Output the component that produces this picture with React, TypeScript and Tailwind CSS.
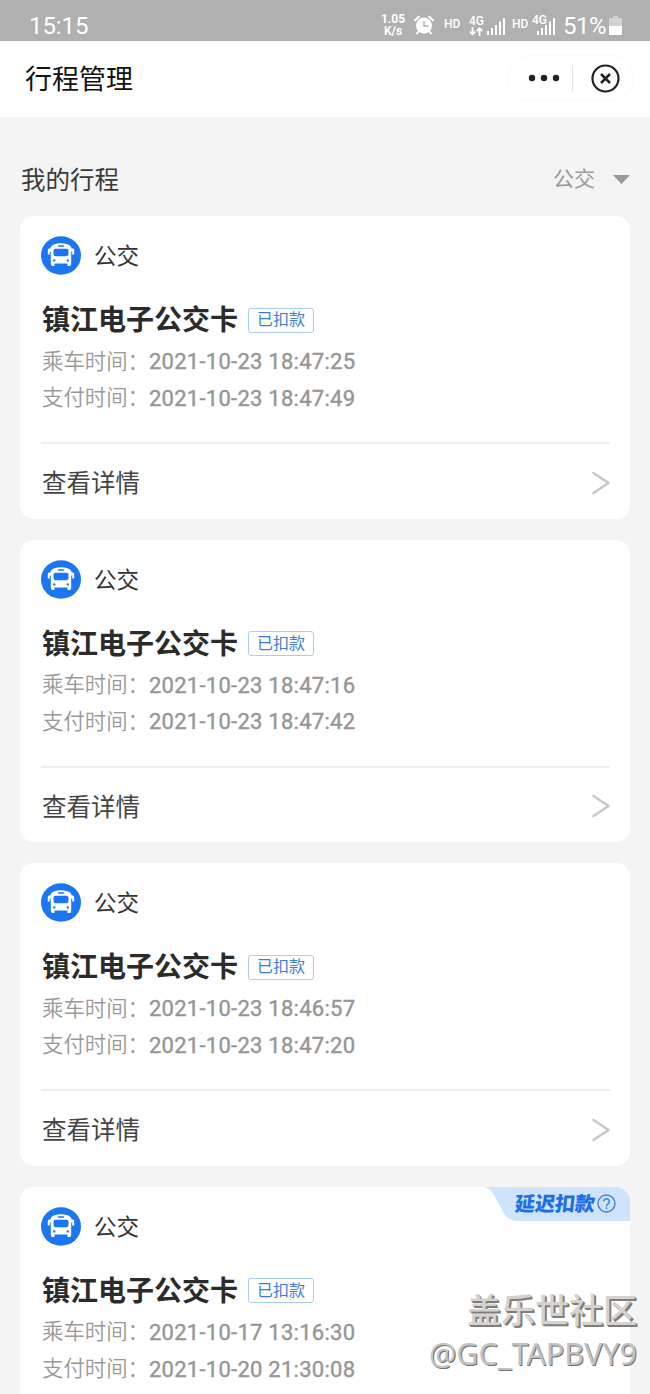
import React from 'react';

interface Trip {
  rideTime: string;
  payTime: string;
  delayed?: boolean;
}

const TRIPS: Trip[] = [
  { rideTime: '2021-10-23 18:47:25', payTime: '2021-10-23 18:47:49' },
  { rideTime: '2021-10-23 18:47:16', payTime: '2021-10-23 18:47:42' },
  { rideTime: '2021-10-23 18:46:57', payTime: '2021-10-23 18:47:20' },
  { rideTime: '2021-10-17 13:16:30', payTime: '2021-10-20 21:30:08', delayed: true },
];

const SignalBars: React.FC<{ className?: string }> = ({ className }) => (
  <svg className={className} width="18" height="18" viewBox="0 0 18 18" fill="currentColor">
    <rect x="0" y="14" width="2" height="4" />
    <rect x="4" y="11" width="2" height="7" />
    <rect x="8" y="8" width="2" height="10" />
    <rect x="12" y="4.500" width="2" height="13.500" />
    <rect x="16" y="1" width="2" height="17" />
  </svg>
);

const AlarmIcon = () => (
  <svg width="20" height="20" viewBox="0 0 20 20" fill="none" stroke="currentColor" strokeLinecap="round">
    <circle cx="10" cy="10.500" r="8" fill="currentColor" stroke="none" />
    <path d="M1 5.200 5 1.600M19 5.200 15 1.600" strokeWidth="2" />
    <path d="M4.800 16 3 18.500M15.200 16 17 18.500" strokeWidth="2" />
    <path d="M10 6.500v4.500h4" stroke="#b0b0b0" strokeWidth="1.500" />
  </svg>
);

const StatusBar = () => (
  <div className="flex h-[41px] shrink-0 items-end bg-[#b0b0b0] pb-[2px] pl-[29px] pr-[28px] text-white">
    <span className="font-[Roboto] text-[24px] leading-[25px] tracking-[-0.1px]">15:15</span>
    <div className="ml-auto flex items-end font-[Roboto]">
      <div className="mb-[2px] mr-px w-[26px] text-center text-[12px] font-bold leading-[12px]">
        <div>1.05</div>
        <div>K/s</div>
      </div>
      <div className="mb-[4px] ml-[7px]"><AlarmIcon /></div>
      <span className="mb-[8px] ml-[10px] w-[17px] text-[12px] font-medium leading-[13px]">HD</span>
      <div className="mb-[3px] ml-[8px] w-[17px] text-[12px] font-medium leading-[11px]">
        <div>4G</div>
        <svg width="14" height="9" viewBox="0 0 14 9" fill="none" stroke="currentColor" strokeWidth="1.800">
          <path d="M3.500 0v7M.8 4.500 3.500 7.500l2.700-3M10.500 9V1.500M7.800 4.200l2.700-3 2.700 3" />
        </svg>
      </div>
      <SignalBars className="mb-[4px] ml-px" />
      <span className="mb-[8px] ml-[7px] w-[17px] text-[12px] font-medium leading-[13px]">HD</span>
      <div className="relative mb-[4px] ml-[8px]">
        <SignalBars />
        <span className="absolute -left-[5px] -top-[3px] text-[12px] font-medium leading-[12px] [text-shadow:0_0_1px_#b0b0b0]">4G</span>
      </div>
      <span className="ml-[8px] w-[45px] text-[24px] leading-[25px] tracking-[-0.5px]">51%</span>
      <svg className="mb-[4px] ml-px" width="13" height="19" viewBox="0 0 13 19">
        <path d="M4 0h5v2h4v17H0V2h4z" fill="#d2d2d2" />
        <path d="M0 10h13v8a1 1 0 0 1-1 1H1a1 1 0 0 1-1-1z" fill="#fff" />
      </svg>
    </div>
  </div>
);

const Header = () => (
  <header className="flex h-[76px] shrink-0 items-center justify-between bg-white pb-[2px] pl-[25px] pr-[16px]">
    <h1 className="pb-[2px] text-[27px] leading-none text-[#111]">行程管理</h1>
    <div className="flex h-[46px] w-[127px] items-center rounded-full border border-[#fafafa] pl-[20px] text-[#222]">
      <svg width="32" height="8" viewBox="0 0 32 8" fill="currentColor">
        <circle cx="4" cy="4" r="3.200" />
        <circle cx="16" cy="4" r="3.200" />
        <circle cx="28" cy="4" r="3.200" />
      </svg>
      <div className="ml-[12px] h-[26px] w-px bg-[#e4e4e4]" />
      <svg className="ml-[18px]" width="29" height="29" viewBox="0 0 29 29" fill="none" stroke="currentColor">
        <circle cx="14.500" cy="14.500" r="13" strokeWidth="2.200" />
        <path d="m10 10 9 9m0-9-9 9" strokeWidth="2.500" />
      </svg>
    </div>
  </header>
);

const BusIcon = () => (
  <svg width="40" height="39" viewBox="0 0 40 39">
    <ellipse cx="20" cy="19.500" rx="20" ry="19.300" fill="#1b76f2" />
    <path
      fill="#fff"
      d="M13.500 8.200Q20 6.400 26.500 8.200Q30 9.300 30.700 12.500H32q1.200.2 1.200 1.700v4.300h-2v-3h-1V27.500q0 2.500-1.700 2.500h-2v-2.500H13.500V30h-2q-1.700 0-1.700-2.500V15.500h-1v3h-2v-4.300Q6.800 12.700 8 12.500h1.300Q10 9.300 13.500 8.200z"
    />
    <path d="M17.500 10h5" stroke="#1b76f2" strokeWidth="1.300" strokeLinecap="round" />
    <path d="M14.500 12.700h11q2 0 2 2v2.500q0 3-2.300 3H14.800q-2.300 0-2.300-3v-2.500q0-2 2-2z" fill="#1b76f2" />
    <circle cx="13.200" cy="24.400" r="1.200" fill="#1b76f2" />
    <circle cx="26.800" cy="24.400" r="1.200" fill="#1b76f2" />
  </svg>
);

const TimeValue: React.FC<{ value: string }> = ({ value }) => (
  <span className="pt-[2px] font-[Roboto] text-[22px] tracking-[0.26px] text-[#969696] [-webkit-text-stroke:0.4px_#969696]">
    {value}
  </span>
);

const DelayBadge = () => (
  <div className="absolute right-0 top-0 h-[34px] w-[146px] overflow-hidden rounded-tr-[14px]">
    <svg className="absolute inset-0" width="146" height="34" viewBox="0 0 146 34">
      <path d="M0 0Q6 1 10 8L18 23Q23 34 34 34H146V0z" fill="#d0e3fc" />
    </svg>
    <div className="relative flex h-full items-center pl-[31px] text-[#1b6fe8]">
      <span className="-skew-x-6 pb-px text-[20px] font-black leading-none">延迟扣款</span>
      <svg className="ml-[2px]" width="19" height="19" viewBox="0 0 19 19" fill="none" stroke="#3f82e0">
        <circle cx="9.500" cy="9.500" r="8.500" strokeWidth="1.400" />
        <path d="M6.700 7.500a2.800 2.800 0 1 1 4.500 2.200q-1.700 1.100-1.700 2.500M9.500 13.300v1.700" strokeWidth="1.500" />
      </svg>
    </div>
  </div>
);

const TripCard: React.FC<{ trip: Trip }> = ({ trip }) => (
  <section className="relative h-[302.600px] shrink-0 rounded-[14px] bg-white pl-[21px] pr-[20px] pt-[20px]">
    {trip.delayed && <DelayBadge />}
    <div className="flex h-[39px] items-center">
      <BusIcon />
      <span className="ml-[13px] pb-[2px] text-[22.500px] leading-none text-[#333]">公交</span>
    </div>
    <div className="mt-[28px] flex h-[32px] items-center pl-px">
      <h2 className="pb-[2px] text-[28px] font-bold leading-none text-[#2b2b2b]">镇江电子公交卡</h2>
      <span className="ml-[10px] mt-[2px] flex h-[25px] w-[66px] items-center justify-center rounded-[3px] border-[1.500px] border-[#a9cbf5] pb-[4px] text-[16px] leading-none text-[#3b7ed3]">
        已扣款
      </span>
    </div>
    <div className="mt-[8px] pl-px text-[21.400px] text-[#999]">
      <div className="flex h-[36.500px] items-center leading-none">
        <span className="pb-[4px] font-[350]">乘车时间：</span>
        <TimeValue value={trip.rideTime} />
      </div>
      <div className="flex h-[36.500px] items-center leading-none">
        <span className="pb-[4px] font-[350]">支付时间：</span>
        <TimeValue value={trip.payTime} />
      </div>
    </div>
    <div className="mt-[26px] flex h-[79px] items-center justify-between border-t-2 border-[#eeeeee] pl-px text-[24.500px] leading-none text-[#444]">
      <span>查看详情</span>
      <svg width="18" height="24" viewBox="0 0 18 24" fill="none" stroke="#c8c8c8" strokeWidth="2.500" strokeLinecap="round" strokeLinejoin="round">
        <path d="M1.500 2 16.500 12 1.500 22" />
      </svg>
    </div>
  </section>
);

const App = () => (
  <div className="relative flex h-[1394px] w-[650px] flex-col overflow-hidden bg-[#f4f4f4] font-['Noto_Sans_CJK_SC',sans-serif]">
    <StatusBar />
    <Header />

    <div className="mt-[44px] flex h-[36px] shrink-0 items-center justify-between pl-[21px] pr-[20px]">
      <h2 className="text-[24.500px] leading-none text-[#3a3a3a]">我的行程</h2>
      <div className="flex items-center gap-[18px] text-[21px] leading-none text-[#999]">
        <span className="pb-[4px]">公交</span>
        <svg width="17" height="9" viewBox="0 0 17 9" fill="currentColor">
          <path d="M0 0h17L8.500 9z" />
        </svg>
      </div>
    </div>

    <main className="mt-[19px] flex flex-col gap-[21px] px-[20px]">
      {TRIPS.map((trip) => (
        <TripCard key={trip.rideTime} trip={trip} />
      ))}
    </main>

    {/* Community watermark */}
    <div className="absolute bottom-[19px] right-[13px] text-right text-[#d6d2cd] [text-shadow:1px_1px_0_#7d7d7d,2px_2px_0_#7d7d7d]">
      <div className="text-[34px] font-medium leading-[44px]">盖乐世社区</div>
      <div className="font-['Noto_Sans'] text-[30.500px] leading-[44px] text-[#c4c1be] [text-shadow:1px_1px_0_#707070]">@GC_TAPBVY9</div>
    </div>
  </div>
);

export default App;
